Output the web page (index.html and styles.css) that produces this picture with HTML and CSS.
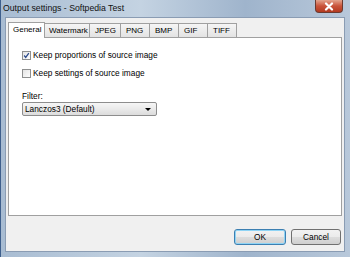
FILE: index.html
```html
<!DOCTYPE html>
<html>
<head>
<meta charset="utf-8">
<link rel="stylesheet" href="styles.css">
</head>
<body>
<div class="window">
  <div class="titlebar">
    <span class="title">Output settings - Softpedia Test</span>
    <div class="close">
      <svg width="12" height="9" viewBox="0 0 12 9"><path d="M3 1.5 L9 7.5 M9 1.5 L3 7.5" stroke="#fff" stroke-width="2.2" stroke-linecap="round"/></svg>
    </div>
  </div>
  <div class="client">
    <div class="tabs">
      <div class="tab active">General</div>
      <div class="tab">Watermark</div>
      <div class="tab">JPEG</div>
      <div class="tab">PNG</div>
      <div class="tab">BMP</div>
      <div class="tab">GIF</div>
      <div class="tab">TIFF</div>
    </div>
    <div class="panel">
      <label class="check"><span class="box checked"><svg width="9" height="9" viewBox="0 0 9 9"><path d="M1.5 4.5 L3.5 7 L7.5 1.5" stroke="#2b4a8b" stroke-width="1.6" fill="none"/></svg></span>Keep proportions of source image</label>
      <label class="check"><span class="box"></span>Keep settings of source image</label>
      <div class="flabel">Filter:</div>
      <div class="select"><span>Lanczos3 (Default)</span><span class="arrow"></span></div>
    </div>
    <div class="buttons">
      <div class="btn default">OK</div>
      <div class="btn">Cancel</div>
    </div>
  </div>
</div>
</body>
</html>
```
FILE: styles.css
```css
html, body { margin: 0; padding: 0; }
body { width: 350px; height: 257px; overflow: hidden; font-family: "Liberation Sans", Arial, sans-serif; font-size: 8.3px; color: #000; }
.window {
  width: 350px; height: 257px; box-sizing: border-box;
  background: linear-gradient(90deg, #a8bcd2 0%, #c4d3e2 40%, #9fb4cc 70%, #b8c8da 100%);
  padding: 0 5px 5px 4px;
  display: flex; flex-direction: column;
  border-left: 1px solid #3e5f8c;
}
.titlebar { height: 17px; display: flex; align-items: flex-start; justify-content: space-between; position: relative; }
.title { font-size: 8.7px; padding-top: 3px; margin-left: -2px; color: #111; }
.close {
  width: 28px; height: 13px; margin-right: 2px; box-sizing: border-box;
  background: linear-gradient(#e3a48e 0%, #c9533a 50%, #b33a20 100%);
  border: 1px solid #6b3a30; border-top: none; border-radius: 0 0 4px 4px;
  display: flex; align-items: center; justify-content: center;
}
.client { flex: 1; background: #f0f0f0; border: 1px solid #8a9cb3; display: flex; flex-direction: column; padding: 4px 1px 0 2px; }
.tabs { display: flex; height: 15px; align-items: flex-end; }
.tab {
  height: 14px; box-sizing: border-box; padding: 2px 0 0 5px; border: 1px solid #a0a0a0; border-bottom: none; margin-left: -1px;
  background: linear-gradient(#f5f5f5, #e3e3e3); font-size: 8px; white-space: nowrap; overflow: hidden;
}
.tab:first-child { margin-left: 0; }
.tab:nth-child(2) { width: 46px; padding-left: 4px; }
.tab:nth-child(3) { width: 32px; }
.tab:nth-child(4), .tab:nth-child(5), .tab:nth-child(6), .tab:nth-child(7) { width: 30px; }
.tab.active { height: 16px; width: 37px; background: #fff; padding: 2px 0 0 4px; position: relative; z-index: 2; margin-bottom: -1px; }
.panel { background: #fff; border: 1px solid #a0a0a0; height: 179px; box-sizing: border-box; margin-right: 1px; padding: 12px 0 0 13px; display: flex; flex-direction: column; }
.check { display: flex; align-items: center; height: 10px; margin-bottom: 8px; }
.box { width: 9px; height: 9px; box-sizing: border-box; border: 1px solid #8e8f8f; background: linear-gradient(135deg, #e4e4e4, #fdfdfd); margin-right: 2px; display: flex; align-items: center; justify-content: center; }
.box svg { display: block; }
.flabel { margin-top: 5px; height: 11px; }
.select { width: 135px; height: 14px; box-sizing: border-box; border: 1px solid #8d8d8d; border-radius: 2px; background: linear-gradient(#f6f6f6 0%, #eaeaea 50%, #dcdcdc 100%); display: flex; align-items: center; justify-content: space-between; padding: 0 5px 0 2px; margin-top: 0; }
.arrow { width: 0; height: 0; border-left: 3px solid transparent; border-right: 3px solid transparent; border-top: 3px solid #000; }
.buttons { display: flex; justify-content: flex-end; gap: 5px; padding: 13px 2px 0 0; }
.btn { width: 52px; height: 16px; box-sizing: border-box; border: 1px solid #707070; border-radius: 3px; background: linear-gradient(#f2f2f2 0%, #ebebeb 50%, #dddddd 51%, #cfcfcf 100%); display: flex; align-items: center; justify-content: center; }
.btn:last-child { width: 50px; }
.btn.default { border-color: #3c7fb1; box-shadow: inset 0 0 0 1px #8fd4f5; }
```
